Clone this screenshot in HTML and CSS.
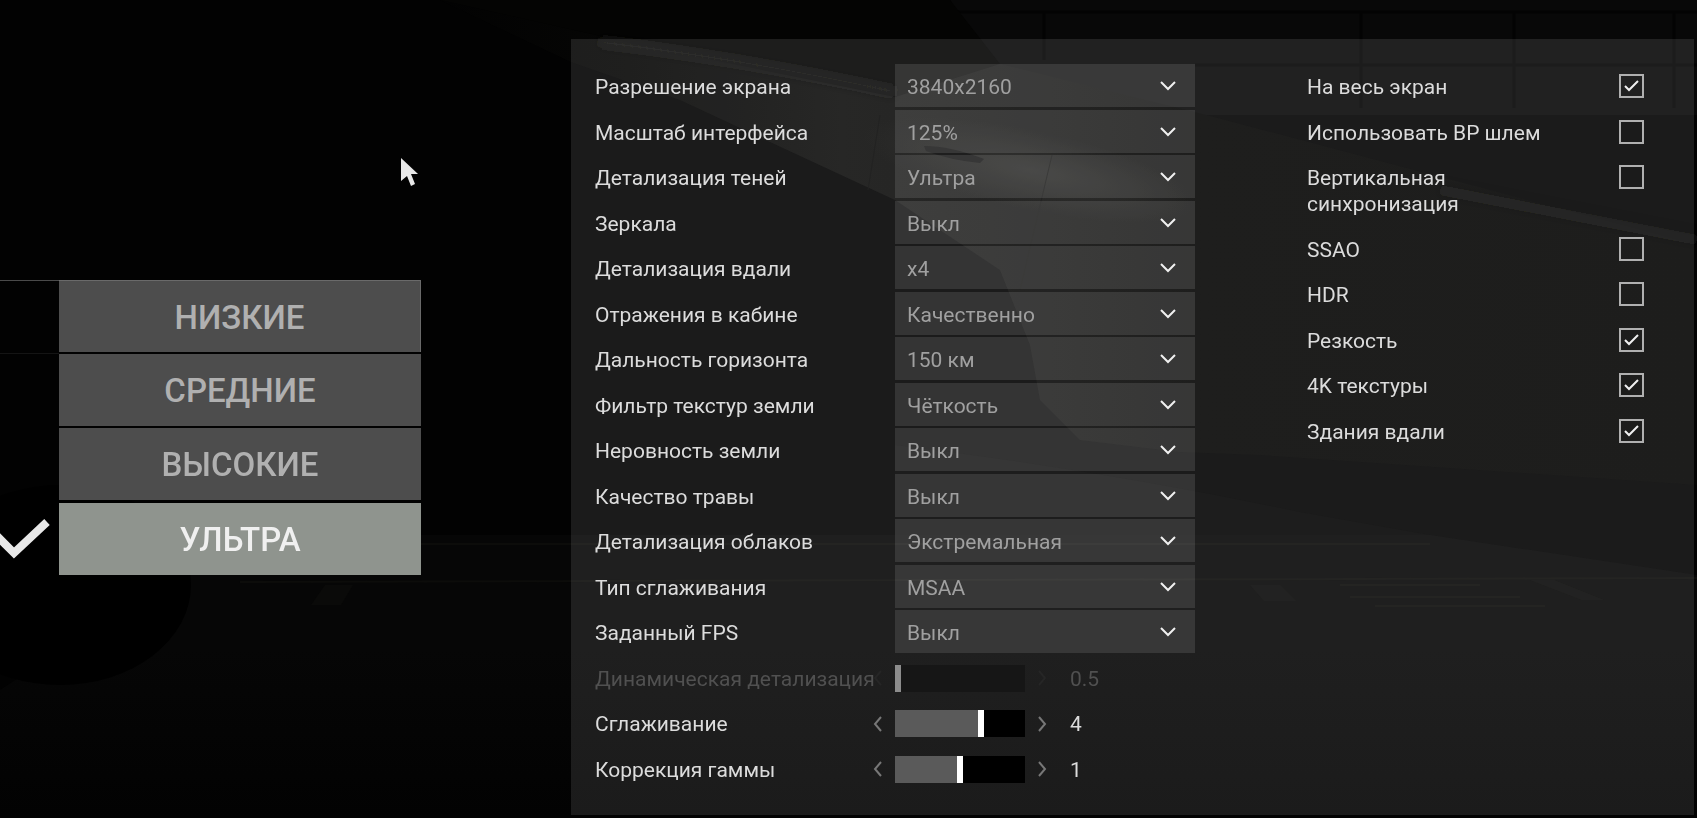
FILE: index.html
```html
<!DOCTYPE html>
<html lang="ru">
<head>
    <meta charset="UTF-8">
    <meta name="viewport" content="width=device-width, initial-scale=1.0">
    <title>Настройки графики</title>
    <link rel="stylesheet" href="styles.css">
</head>
<body>

    <!-- Icons -->
    <svg class="sprite" aria-hidden="true">
        <symbol id="down" viewBox="0 0 16 10"><path d="M1 1l7 7 7-7"/></symbol>
        <symbol id="left" viewBox="0 0 10 16"><path d="M8 1L2 8l6 7"/></symbol>
        <symbol id="right" viewBox="0 0 10 16"><path d="M2 1l6 7-6 7"/></symbol>
    </svg>

    <!-- Hangar scene behind the menu -->
    <svg class="scene" viewBox="0 0 1697 818" preserveAspectRatio="none" aria-hidden="true">
        <defs>
            <linearGradient id="wing" gradientUnits="userSpaceOnUse" x1="440" y1="0" x2="1697" y2="0">
                <stop offset="0" stop-color="#020202"/>
                <stop offset=".15" stop-color="#060605"/>
                <stop offset=".32" stop-color="#0f0f0e"/>
                <stop offset=".44" stop-color="#0c0c0b"/>
                <stop offset=".6" stop-color="#050504"/>
                <stop offset="1" stop-color="#040403"/>
            </linearGradient>
            <linearGradient id="ground" x1="0" y1="0" x2="0" y2="1">
                <stop offset="0" stop-color="#060606"/>
                <stop offset=".4" stop-color="#060606"/>
                <stop offset="1" stop-color="#020202"/>
            </linearGradient>
            <radialGradient id="glow">
                <stop offset="0" stop-color="#1c1c1a"/>
                <stop offset="1" stop-color="#1c1c1a" stop-opacity="0"/>
            </radialGradient>
            <filter id="soft" x="-10%" y="-50%" width="120%" height="200%"><feGaussianBlur stdDeviation="4"/></filter>
        </defs>
        <path class="hangar" d="M950 0H1697V115H1195L990 64z"/>
        <path class="beam" d="M950 12H1697M1195 65H1697M1044 12V60M1361 12V108M1514 12V108M1674 12V108"/>
        <path d="M240 535H1430L1697 575V818H0V690z" fill="url(#ground)"/>
        <path class="sky" d="M440 0H950L1000 64L895 97L640 45z"/>
        <path d="M440 0L640 45L895 97L1000 64L1195 112L1697 245V485L1260 455L1180 452L1080 440L1040 400L1030 345L1000 270L895 200L680 100L571 62z" fill="url(#wing)"/>
        <path d="M895 445Q1100 470 1300 512L1430 535H895z" fill="#040404"/>
        <ellipse cx="1030" cy="170" rx="170" ry="40" transform="rotate(12 1030 170)" fill="url(#glow)"/>
        <path class="shine" d="M600 42Q750 60 895 92"/>
        <path class="shine far" d="M1440 190L1697 240"/>
        <path class="seam" d="M1052 155L1020 290M880 115L868 190"/>
        <path class="slot" d="M924 146Q950 146 984 159L980 163Q950 160 926 151z"/>
        <path class="marking" d="M420 544H1430M240 582L1697 578M1340 585H1480M1350 597H1520M1375 606H1545"/>
        <path class="patch" d="M1250 585h30l16 16h-32zM1530 580h24l50 20h-22zM325 585h28l-12 20h-30z"/>
        <ellipse class="wheel" cx="60" cy="585" rx="131" ry="100"/>
    </svg>

    <main>
        <!-- Presets -->
        <nav class="presets">
            <button type="button">НИЗКИЕ</button>
            <button type="button">СРЕДНИЕ</button>
            <button type="button">ВЫСОКИЕ</button>
            <button type="button" class="active" aria-pressed="true">УЛЬТРА
                <svg class="tick" viewBox="0 0 60 44" aria-hidden="true"><path d="M0 11L24 35L57 4"/></svg>
            </button>
        </nav>

        <!-- Settings -->
        <form class="panel">
            <div class="options">
                <label for="resolution">Разрешение экрана</label>
                <div class="select"><select id="resolution"><option>3840x2160</option></select><svg><use href="#down"/></svg></div>

                <label for="scale">Масштаб интерфейса</label>
                <div class="select"><select id="scale"><option>125%</option></select><svg><use href="#down"/></svg></div>

                <label for="shadows">Детализация теней</label>
                <div class="select"><select id="shadows"><option>Ультра</option></select><svg><use href="#down"/></svg></div>

                <label for="mirrors">Зеркала</label>
                <div class="select"><select id="mirrors"><option>Выкл</option></select><svg><use href="#down"/></svg></div>

                <label for="distance">Детализация вдали</label>
                <div class="select"><select id="distance"><option>x4</option></select><svg><use href="#down"/></svg></div>

                <label for="reflections">Отражения в кабине</label>
                <div class="select"><select id="reflections"><option>Качественно</option></select><svg><use href="#down"/></svg></div>

                <label for="horizon">Дальность горизонта</label>
                <div class="select"><select id="horizon"><option>150 км</option></select><svg><use href="#down"/></svg></div>

                <label for="filter">Фильтр текстур земли</label>
                <div class="select"><select id="filter"><option>Чёткость</option></select><svg><use href="#down"/></svg></div>

                <label for="terrain">Неровность земли</label>
                <div class="select"><select id="terrain"><option>Выкл</option></select><svg><use href="#down"/></svg></div>

                <label for="grass">Качество травы</label>
                <div class="select"><select id="grass"><option>Выкл</option></select><svg><use href="#down"/></svg></div>

                <label for="clouds">Детализация облаков</label>
                <div class="select"><select id="clouds"><option>Экстремальная</option></select><svg><use href="#down"/></svg></div>

                <label for="aatype">Тип сглаживания</label>
                <div class="select"><select id="aatype"><option>MSAA</option></select><svg><use href="#down"/></svg></div>

                <label for="fps">Заданный FPS</label>
                <div class="select"><select id="fps"><option>Выкл</option></select><svg><use href="#down"/></svg></div>

                <label for="dynamic" class="off">Динамическая детализация</label>
                <div class="slider off">
                    <button type="button" aria-label="Меньше" disabled><svg><use href="#left"/></svg></button>
                    <input type="range" id="dynamic" min="0.5" max="1" step="0.1" value="0.5" style="--fill: 0%" disabled>
                    <button type="button" aria-label="Больше" disabled><svg><use href="#right"/></svg></button>
                    <output for="dynamic">0.5</output>
                </div>

                <label for="aa">Сглаживание</label>
                <div class="slider">
                    <button type="button" aria-label="Меньше"><svg><use href="#left"/></svg></button>
                    <input type="range" id="aa" min="0" max="6" value="4" style="--fill: 66%">
                    <button type="button" aria-label="Больше"><svg><use href="#right"/></svg></button>
                    <output for="aa">4</output>
                </div>

                <label for="gamma">Коррекция гаммы</label>
                <div class="slider">
                    <button type="button" aria-label="Меньше"><svg><use href="#left"/></svg></button>
                    <input type="range" id="gamma" min="0" max="2" step="0.1" value="1" style="--fill: 50%">
                    <button type="button" aria-label="Больше"><svg><use href="#right"/></svg></button>
                    <output for="gamma">1</output>
                </div>
            </div>

            <div class="checks">
                <label>На весь экран <input type="checkbox" checked></label>
                <label>Использовать ВР шлем <input type="checkbox"></label>
                <label class="tall"><span>Вертикальная<br>синхронизация</span> <input type="checkbox"></label>
                <label>SSAO <input type="checkbox"></label>
                <label>HDR <input type="checkbox"></label>
                <label>Резкость <input type="checkbox" checked></label>
                <label>4K текстуры <input type="checkbox" checked></label>
                <label>Здания вдали <input type="checkbox" checked></label>
            </div>
        </form>
    </main>

    <!-- Game cursor -->
    <svg class="cursor" viewBox="0 0 17 28" aria-hidden="true"><path d="M0 0L17 16H10L14 26L10 28L6 18L0 23z"/></svg>

</body>
</html>
```
FILE: styles.css
```css
* {
    box-sizing: border-box;
}

body {
    --row: calc((100vh - 90px) / 16);
    margin: 0;
    background-color: #020202;
    color: #dcdcdc;
    font-family: Roboto, "Noto Sans", sans-serif;
    font-size: 21px;
    line-height: 26px;
}

button,
select,
input {
    margin: 0;
    border: 0;
    border-radius: 0;
    padding: 0;
    font: inherit;
    color: inherit;
}

svg {
    fill: none;
    stroke: currentColor;
    stroke-width: 2;
}

.sprite {
    display: none;
}

/* Background */
.scene {
    position: fixed;
    inset: 0;
    width: 100%;
    height: 100%;
    stroke: none;
}

.hangar {
    fill: #080808;
}

.sky {
    fill: #040403;
}

.beam {
    stroke: #030303;
    stroke-width: 3;
}

.shine {
    stroke: #161614;
    stroke-width: 10;
    filter: url(#soft);
}

.far {
    stroke: #0c0c0a;
}

.seam {
    stroke: #0a0a09;
    stroke-width: 1;
}

.slot {
    fill: #050505;
}

.marking {
    stroke: #0c0c0a;
    stroke-width: 2;
}

.patch {
    fill: #0a0a09;
}

.wheel {
    fill: #000000;
}

/* Layout */
main {
    position: relative;
    display: grid;
    grid-template-columns: 362fr 1123fr;
    gap: 150px;
    min-height: 100vh;
    padding: 39px 3px 3px 59px;
    overflow: hidden;
}

.presets {
    display: flex;
    flex-direction: column;
    gap: 2px;
    padding-top: 241px;
}

.presets button {
    position: relative;
    height: 72px;
    padding-top: 2px;
    background-color: #4d4d4d;
    color: #b0b0b0;
    font-size: 33px;
    font-weight: 500;
}

.presets button:first-child {
    border-top: 1px solid #6a6a6a;
    border-right: 1px solid #6a6a6a;
}

/* Rule running off to the left edge */
.presets button:first-child::before {
    content: "";
    position: absolute;
    top: -1px;
    right: 100%;
    width: 59px;
    height: 72px;
    border-top: 1px solid #4a4a4a;
    border-bottom: 1px solid #141414;
}

.presets .active {
    margin-top: 1px;
    background-color: #8f948e;
    color: #f0f0f0;
}

.tick {
    position: absolute;
    top: 15px;
    right: calc(100% + 9px);
    width: 60px;
    height: 44px;
    color: #e8e8e8;
    stroke-width: 8;
}

.panel {
    display: grid;
    grid-template-columns: 600fr 337fr;
    gap: 112px;
    padding: 25px 50px 23px 24px;
    background-color: rgba(255, 255, 255, 0.1);
}

.options {
    display: grid;
    grid-template-columns: 1fr 1fr;
    grid-auto-rows: var(--row);
}

.options label {
    padding-top: 10px;
    white-space: nowrap;
}

.select {
    display: grid;
    grid-template-columns: 1fr 16px;
    padding-right: 19px;
    height: 43px;
    background-color: rgba(255, 255, 255, 0.11);
}

.select select {
    grid-area: 1 / 1 / 2 / 3;
    appearance: none;
    padding: 3px 12px 0;
    background: none;
    color: #a0a0a0;
}

.select svg {
    grid-area: 1 / 2;
    width: 16px;
    height: 10px;
    margin-top: 17px;
    color: #f0f0f0;
    pointer-events: none;
}

.slider {
    display: flex;
    gap: 12px;
    margin-left: -22px;
    padding-top: 9px;
}

.slider button {
    display: flex;
    align-items: center;
    height: 27px;
    background: none;
    color: #777777;
}

.slider button svg {
    width: 10px;
    height: 16px;
}

.slider input {
    appearance: none;
    width: 130px;
    height: 27px;
    background: linear-gradient(to right, #5a5a5a var(--fill), #000000 var(--fill));
}

.slider input::-webkit-slider-thumb {
    appearance: none;
    width: 6px;
    height: 27px;
    background-color: #ffffff;
}

.slider output {
    padding: 1px 0 0 11px;
}

.off {
    color: #505050;
}

.slider.off button {
    color: #262626;
}

.slider.off input {
    background: #161616;
}

.slider.off input::-webkit-slider-thumb {
    background-color: #8c8c8c;
}

/* Checkboxes */
.checks {
    display: flex;
    flex-direction: column;
}

.checks label {
    display: flex;
    justify-content: space-between;
    height: var(--row);
    padding-top: 10px;
}

.checks .tall {
    height: calc(var(--row) + 26px);
}

.checks input {
    appearance: none;
    width: 25px;
    height: 24px;
    border: 2px solid #b0b0b0;
}

.checks input:checked {
    background: no-repeat center url("data:image/svg+xml,%3Csvg xmlns='http://www.w3.org/2000/svg' width='17' height='14'%3E%3Cpath d='M2 7l4 4L15 2' fill='none' stroke='%23f0f0f0' stroke-width='2'/%3E%3C/svg%3E");
}

.cursor {
    position: fixed;
    top: 158px;
    left: 401px;
    width: 17px;
    height: 28px;
    fill: #e8e8e8;
    stroke: none;
}
```
